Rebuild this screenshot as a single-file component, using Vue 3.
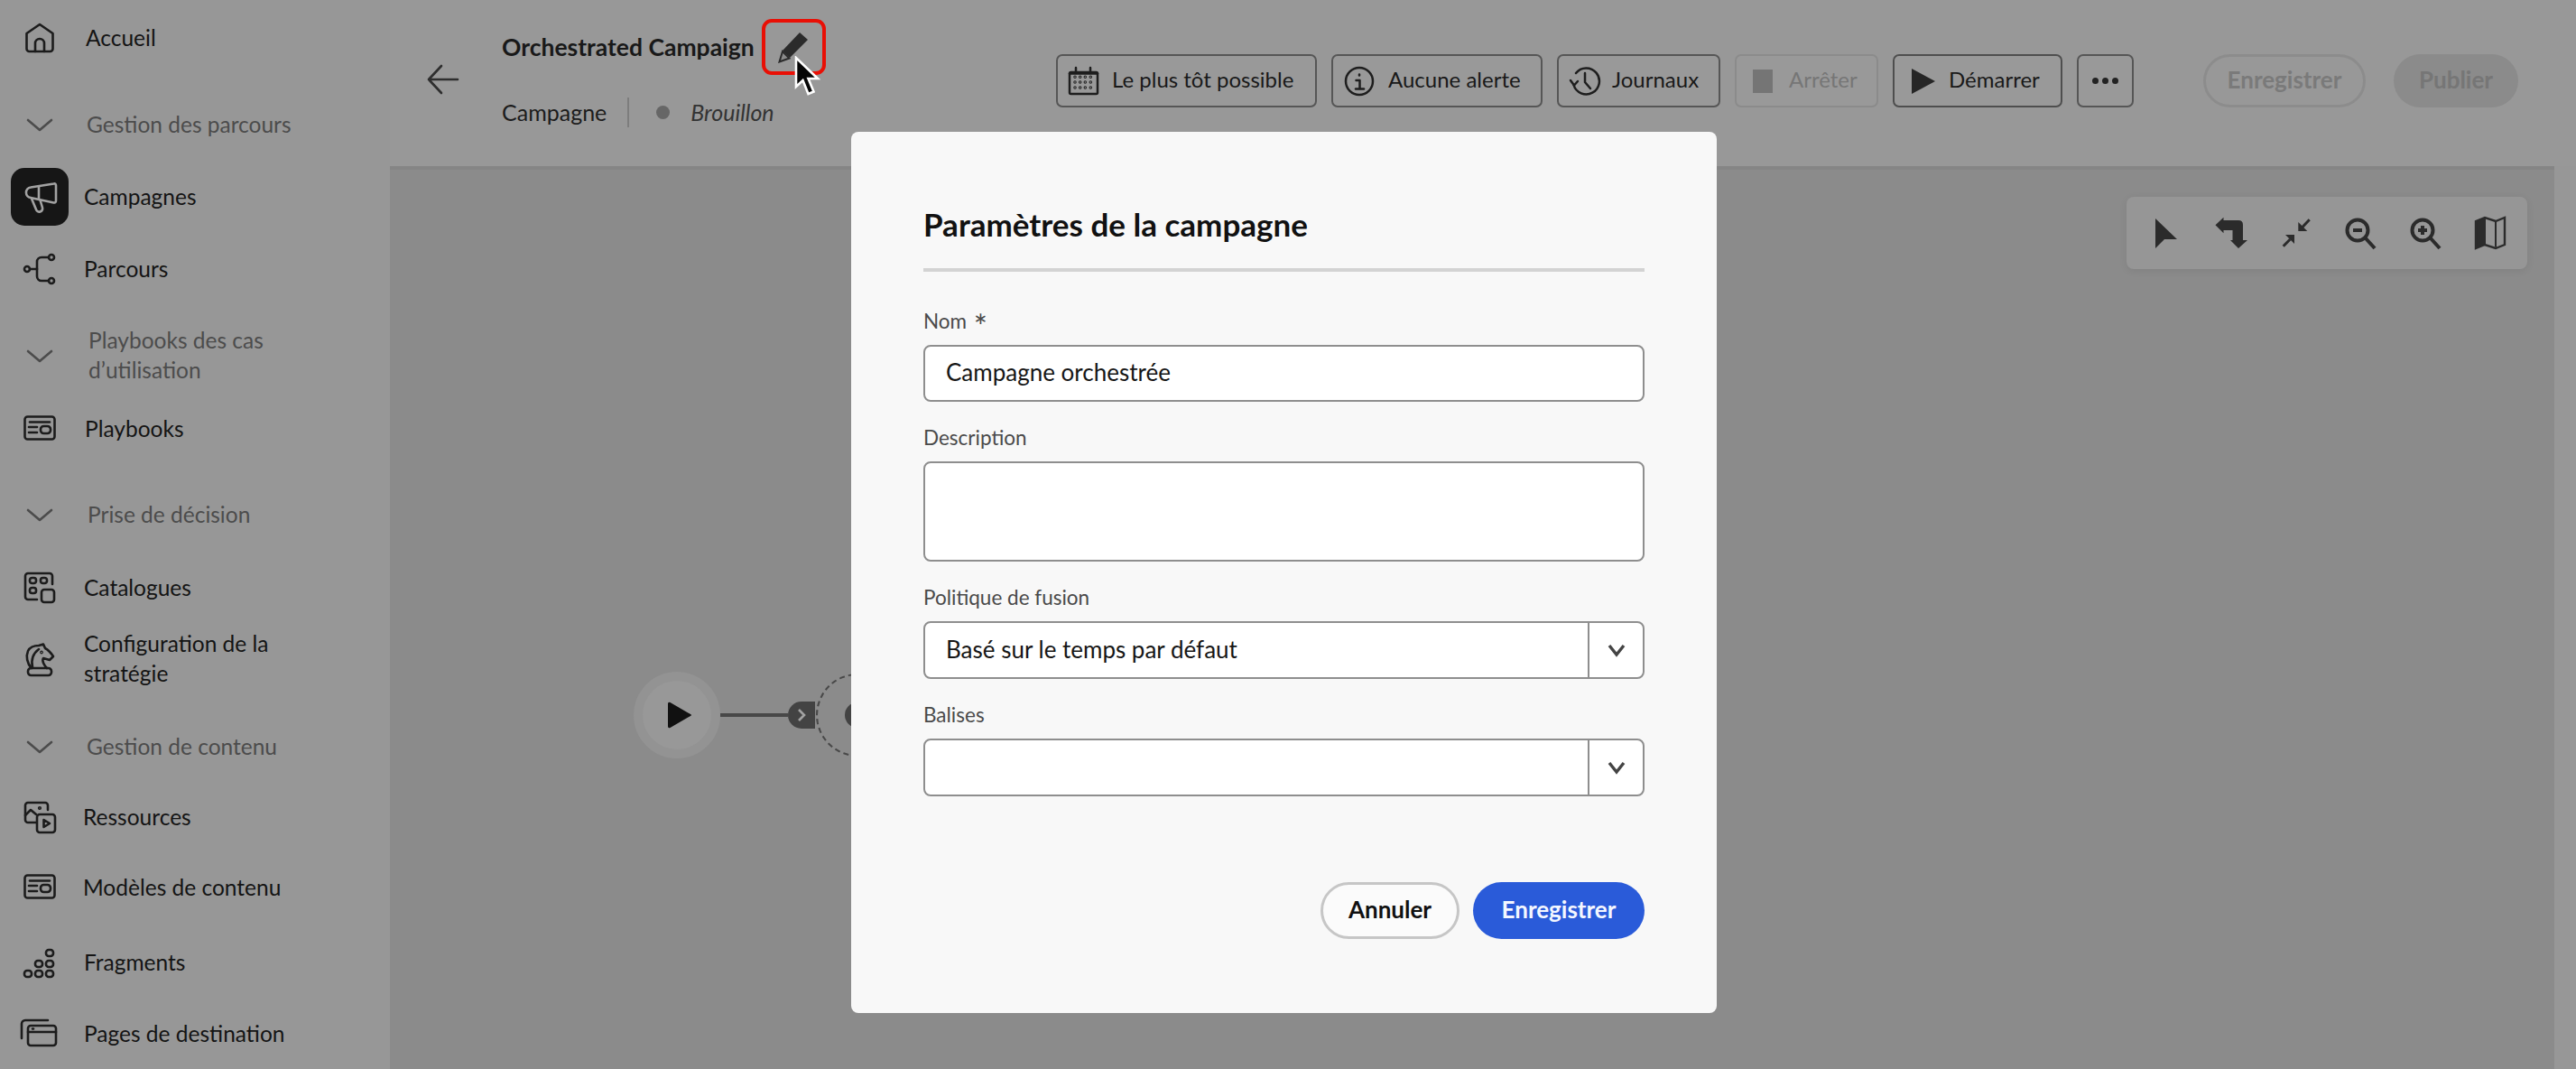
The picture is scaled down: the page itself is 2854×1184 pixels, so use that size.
<script setup>
const c = (x, y, r) => `M${x - r} ${y}a${r} ${r} 0 1 0 ${2 * r} 0a${r} ${r} 0 1 0 ${-2 * r} 0Z`
const rr = (x, y, w, h, r) => `M${x + r} ${y}H${x + w - r}a${r} ${r} 0 0 1 ${r} ${r}V${y + h - r}a${r} ${r} 0 0 1 ${-r} ${r}H${x + r}a${r} ${r} 0 0 1 ${-r} ${-r}V${y + r}a${r} ${r} 0 0 1 ${r} ${-r}Z`

const card = [rr(1.5, 4.5, 33, 25, 3), 'M7 10.5H29', 'M6 16H15', 'M6 22H15', rr(19, 15, 11, 8, 3.5)]
const nav = {
  home: ['M18 3L3.5 13V30a3 3 0 0 0 3 3H29.5a3 3 0 0 0 3-3V13Z', 'M13 33V24a5 5 0 0 1 10 0V33'],
  horn: ['M8 7.5L33.5 3.5Q36 3 36 5.5V22Q36 25 33.5 24.5L8 19A5.8 5.8 0 0 1 8 7.5Z', 'M17 6.5V20.5', 'M9 20L14 32a3.5 3.5 0 0 0 7-2L18.5 21.5'],
  flow: [c(4, 18, 3), c(31, 5, 3), c(31, 31, 3), 'M7 18H15', 'M28 5H20a5 5 0 0 0-5 5V26a5 5 0 0 0 5 5H28'],
  card,
  cat: ['M32 14V5a3 3 0 0 0-3-3H5a3 3 0 0 0-3 3V28a3 3 0 0 0 3 3H15', rr(7, 7, 7, 6, 2.5), rr(19, 7, 7, 6, 2.5), rr(7, 18, 7, 6, 2.5), rr(20, 20, 14, 14, 3)],
  knight: [rr(5, 28, 26, 8, 3.5), 'M9 28C4 23 2.5 15 5 9C7 5 12 3 17 3L22 1.5L24 6C28 8 31 12 33 15L29 19L22 17C20 20 23 25 26 28', 'M10 27C8.5 20 9 13 17 7', c(20, 10.5, .6)],
  res: ['M14 24H5a3 3 0 0 1-3-3V5a3 3 0 0 1 3-3H24a3 3 0 0 1 3 3V10', 'M2 16L8 10L14 15', c(18, 8, .8), rr(15, 15, 20, 20, 3), 'M22.5 21L29 25L22.5 29Z'],
  frag: [rr(1, 27, 8, 7, 3), rr(13, 27, 8, 7, 3), rr(25, 27, 8, 7, 3), rr(13, 16, 8, 7, 3), rr(25, 16, 8, 7, 3), rr(25, 4, 8, 7, 3)],
  pages: ['M27 3H2a4 4 0 0 0-4 4V23', rr(5, 9, 31, 22, 3), 'M5 16H36', 'M10 12.5H11'],
  chev: ['M5 13L18 24L31 13'],
}

const rows = [
  { t: ['Accueil'], i: 'home', mt: 10, x: 95 },
  { t: ['Gestion des parcours'], head: true, mt: 32, x: 96 },
  { t: ['Campagnes'], i: 'horn', active: true, mt: 16, x: 93 },
  { t: ['Parcours'], i: 'flow', mt: 16, x: 93 },
  { t: ['Playbooks des cas', 'd’utilisation'], head: true, mt: 32, x: 98 },
  { t: ['Playbooks'], i: 'card', mt: 17, x: 94 },
  { t: ['Prise de décision'], head: true, mt: 31, x: 97 },
  { t: ['Catalogues'], i: 'cat', mt: 17, x: 93 },
  { t: ['Configuration de la', 'stratégie'], i: 'knight', mt: 15, x: 93 },
  { t: ['Gestion de contenu'], head: true, mt: 33, x: 96 },
  { t: ['Ressources'], i: 'res', mt: 14, x: 92 },
  { t: ['Modèles de contenu'], i: 'card', mt: 14, x: 92 },
  { t: ['Fragments'], i: 'frag', mt: 19, x: 93 },
  { t: ['Pages de destination'], i: 'pages', mt: 15, x: 93 },
]

const calDots = []
for (const y of [13.3, 19, 25]) for (const x of [8, 13.7, 19.3, 25.3]) calDots.push(c(x, y, 0.5))
const actionIcons = {
  cal: [rr(2, 8, 31, 24, 1.5), 'M2 9.5H33', 'M9 3V8', 'M25 3V8', ...calDots],
  info: [c(18, 18, 15), 'M14.5 17H18.5V26', 'M14 26.5H23', 'M18 10.5V11.5'],
  hist: ['M5.5 22A14.5 14.5 0 1 0 8 9', 'M18 9V19L24 26', 'M2 17L6 22.5L10 18'],
}
const actions = [
  { t: 'Le plus tôt possible', i: 'cal', w: 289, tx: 60 },
  { t: 'Aucune alerte', i: 'info', w: 234, tx: 61 },
  { t: 'Journaux', i: 'hist', w: 181, tx: 59 },
  { t: 'Arrêter', stop: true, w: 159, tx: 58, off: true },
  { t: 'Démarrer', play: true, w: 188, tx: 60 },
]
const tools = [
  { k: 'sel', fill: ['M6 2L30 25H16L6 35Z'], line: [] },
  { k: 'route', fill: ['M.5 9.3L9.5 .7V4H26Q31 4 31 9V26H36L26 35L17 26H19.5V15H9.5V18.3Z'], line: [] },
  { k: 'fit', fill: ['M20.3 16V6L30.3 16Z', 'M16 20H6L16 30Z'], line: ['M24.7 11.7L32.7 3.3', 'M11.3 25L3.7 32.7'], w: 3 },
  { k: 'out', fill: [], line: [c(15, 15, 11.5), 'M24 24L34 35', 'M10 15H20'], w: 4 },
  { k: 'in', fill: [], line: [c(15, 15, 11.5), 'M24 24L34 35', 'M10 15H20', 'M15 10V20'], w: 4 },
  { k: 'map', fill: ['M3 4L13 1V31L3 35Z', 'M23 4L25 5V35L23 33Z'], line: ['M2 5L12 1L24 5L34 1V31L24 35L12 31L2 35Z'], w: 2.4 },
]
</script>

<template>
  <div class="page">
    <aside class="side">
      <div
        v-for="r in rows"
        :key="r.t[0]"
        class="row"
        :class="{ head: r.head }"
        :style="{ marginTop: r.mt + 'px', paddingLeft: r.x + 'px' }"
      >
        <span class="ico" :class="{ on: r.active }">
          <svg width="36" height="36" viewBox="0 0 36 36" class="svg">
            <path v-for="d in nav[r.head ? 'chev' : r.i]" :key="d" :d="d" />
          </svg>
        </span>
        <span class="lbl"><span v-for="l in r.t" :key="l" class="ln">{{ l }}</span></span>
      </div>
    </aside>

    <main class="main">
      <header class="top">
        <svg class="back" width="36" height="36" viewBox="0 0 36 36">
          <path d="M34 18H2M16 3L2 18L16 33" />
        </svg>
        <div class="meta">
          <div class="name">Orchestrated Campaign</div>
          <div class="sub">
            <span>Campagne</span>
            <i class="sep"></i>
            <i class="dot"></i>
            <em>Brouillon</em>
          </div>
        </div>
        <div class="acts">
          <button
            v-for="a in actions"
            :key="a.t"
            class="act"
            :class="{ off: a.off, strong: a.play }"
            :style="{ width: a.w + 'px' }"
          >
            <svg v-if="a.i" class="aico" width="36" height="36" viewBox="0 0 36 36">
              <path v-for="d in actionIcons[a.i]" :key="d" :d="d" />
            </svg>
            <span v-if="a.stop" class="stop"></span>
            <svg v-if="a.play" class="pl" width="30" height="30" viewBox="0 0 30 30"><path d="M2 1L28 15L2 29Z" /></svg>
            <span class="atxt" :style="{ left: a.tx + 'px' }">{{ a.t }}</span>
          </button>
          <button class="act more" aria-label="Plus"><i></i><i></i><i></i></button>
          <button class="pill ghost">Enregistrer</button>
          <button class="pill solid">Publier</button>
        </div>
      </header>
      <div class="rule"></div>
      <section class="canvas">
        <div class="tools">
          <svg v-for="t in tools" :key="t.k" width="36" height="36" viewBox="0 0 36 36" class="tool">
            <path v-for="d in t.fill" :key="d" :d="d" class="tf" />
            <path v-for="d in t.line" :key="d" :d="d" class="tl" :stroke-width="t.w" />
          </svg>
        </div>
        <div class="node">
          <div class="start">
            <svg width="30" height="30" viewBox="0 0 30 30"><path d="M3 2.5Q3 0 5.5 1L28 14Q30 15 28 16L5.5 29Q3 30 3 27.5Z" /></svg>
          </div>
          <div class="wire"></div>
          <div class="tag">
            <svg width="12" height="16" viewBox="0 0 12 16"><path d="M3 2L9 8L3 14" /></svg>
          </div>
          <div class="slot"><div class="plus"></div></div>
        </div>
      </section>
    </main>

    <section class="modal">
      <h2 class="mtitle">Paramètres de la campagne</h2>
      <div class="mrule"></div>
      <div class="field">
        <label class="flabel">Nom <span class="req">*</span></label>
        <input class="inp" value="Campagne orchestrée" readonly />
      </div>
      <div class="field">
        <label class="flabel">Description</label>
        <textarea class="inp area" readonly></textarea>
      </div>
      <div class="field">
        <label class="flabel">Politique de fusion</label>
        <div class="combo">
          <input class="cinp" value="Basé sur le temps par défaut" readonly />
          <span class="cbtn"><svg width="22" height="16" viewBox="0 0 22 16"><path d="M3 3L11 13L19 3" /></svg></span>
        </div>
      </div>
      <div class="field">
        <label class="flabel">Balises</label>
        <div class="combo">
          <input class="cinp" value="" readonly />
          <span class="cbtn"><svg width="22" height="16" viewBox="0 0 22 16"><path d="M3 3L11 13L19 3" /></svg></span>
        </div>
      </div>
      <footer class="mfoot">
        <button class="mb cancel">Annuler</button>
        <button class="mb save">Enregistrer</button>
      </footer>
    </section>

    <div class="mark">
      <svg width="36" height="36" viewBox="0 0 36 36">
        <path d="M5 22L24 2L33 10L13 30Z" fill="#2b2b2b" />
        <path d="M1.5 34.5L5 23L12.5 30.5Z" fill="#8a8a8a" stroke="#2b2b2b" stroke-width="2" />
      </svg>
    </div>
    <svg class="cursor" width="30" height="46" viewBox="0 0 30 46">
      <path d="M2 2V34L9.5 27L15.5 42L21.5 39.5L15.5 25H26Z" fill="#050505" stroke="#fff" stroke-width="2.6" stroke-linejoin="miter" />
    </svg>
  </div>
</template>

<style>
html, body { margin: 0; background: #979797; }
</style>

<style scoped>
.page {
  position: relative;
  display: flex;
  width: 2854px;
  height: 1184px;
  overflow: hidden;
  background: #979797;
  font-family: Lato, "Liberation Sans", sans-serif;
  color: #161616;
}
button { font-family: inherit; padding: 0; cursor: default; }
em, i { font-style: normal; }

.side { width: 432px; flex: none; display: flex; flex-direction: column; }
.row { position: relative; display: flex; align-items: center; height: 64px; box-sizing: border-box; font-size: 24.5px; line-height: 33px; color: #141414; }
.row.head { color: #4c4c4c; }
.ico {
  position: absolute;
  left: 12px;
  top: 0;
  width: 64px;
  height: 64px;
  border-radius: 15px;
  display: flex;
  align-items: center;
  justify-content: center;
  color: #1c1c1c;
}
.ico.on { background: #161616; color: #a2a2a2; }
.head .ico { color: #4c4c4c; }
.svg { overflow: visible; fill: none; stroke: currentColor; stroke-width: 2.6; stroke-linejoin: round; stroke-linecap: round; }
.lbl { display: flex; flex-direction: column; padding-bottom: 2px; }
.ln { white-space: nowrap; }

.main { flex: 1; display: flex; flex-direction: column; min-width: 0; }
.top { height: 184px; flex: none; display: flex; align-items: flex-start; padding-left: 41px; background: #989898; }
.back { margin-top: 70px; flex: none; fill: none; stroke: #2e2e2e; stroke-width: 2.6; stroke-linecap: round; stroke-linejoin: round; }
.meta { margin-left: 47px; padding-top: 32px; }
.name { font-size: 26.5px; line-height: 40px; font-weight: 700; color: #191919; white-space: nowrap; }
.sub { display: flex; align-items: center; height: 40px; margin-top: 32px; font-size: 25px; color: #1c1c1c; }
.sep { width: 2px; height: 33px; margin-left: 23px; background: #7d7d7d; }
.dot { width: 15px; height: 15px; margin-left: 30px; border-radius: 50%; background: #666; }
.sub em { margin-left: 23px; font-style: italic; color: #333; }

.acts { margin-left: auto; margin-top: 60px; padding-right: 64px; display: flex; align-items: center; gap: 16px; }
.act {
  position: relative;
  display: block;
  height: 59px;
  border: 2px solid #565656;
  border-radius: 7px;
  background: #999;
  box-sizing: border-box;
  color: #191919;
  font-size: 24px;
}
.act.off { border-color: #8b8b8b; color: #767676; }
.act.strong { border-color: #4e4e4e; }
.atxt { position: absolute; top: 11px; line-height: 30px; white-space: nowrap; }
.aico { position: absolute; left: 11px; top: 10px; fill: none; stroke: #1e1e1e; stroke-width: 2.5; stroke-linecap: round; stroke-linejoin: round; }
.stop { position: absolute; left: 18px; top: 15px; width: 22px; height: 26px; background: #757575; }
.pl { position: absolute; left: 17px; top: 13px; fill: #262626; }
.more { width: 63px; display: flex; align-items: center; justify-content: center; gap: 4px; }
.more i { width: 7px; height: 7px; border-radius: 50%; background: #222; }
.pill { height: 59px; padding-bottom: 4px; border-radius: 30px; box-sizing: border-box; font-size: 26px; font-weight: 700; color: #7a7a7a; }
.ghost { width: 180px; margin-left: 61px; border: 3px solid #8c8c8c; background: transparent; }
.solid { width: 138px; margin-left: 15px; border: 0; background: #8b8b8b; color: #767676; }

.rule { height: 4px; flex: none; background: #858585; margin-right: 24px; }
.canvas { position: relative; flex: 1; margin-right: 24px; background: #8b8b8b; }
.tools {
  position: absolute;
  top: 30px;
  right: 30px;
  width: 444px;
  height: 80px;
  box-sizing: border-box;
  padding: 0 23px 0 26px;
  border-radius: 8px;
  background: #969696;
  box-shadow: 0 2px 8px rgba(0, 0, 0, .08);
  display: flex;
  align-items: center;
  justify-content: space-between;
}
.tool { overflow: visible; flex: none; }
.tf { fill: #2b2b2b; }
.tl { fill: none; stroke: #2b2b2b; }

.node { position: absolute; left: 270px; top: 556px; display: flex; align-items: center; }
.start { width: 76px; height: 76px; border: 10px solid #939393; border-radius: 50%; background: #989898; display: flex; align-items: center; justify-content: center; }
.start svg { fill: #111; margin-left: 4px; }
.wire { width: 75px; height: 4px; background: #484848; }
.tag { width: 30px; height: 30px; border-radius: 15px 0 0 15px; background: #434343; display: flex; align-items: center; justify-content: center; }
.tag svg { fill: none; stroke: #a2a2a2; stroke-width: 2.6; }
.slot { width: 92px; height: 92px; margin-left: 1px; box-sizing: border-box; border: 2px dashed #484848; border-radius: 50%; display: flex; align-items: center; justify-content: center; }
.plus { width: 28px; height: 28px; border-radius: 50%; background: #434343; }

.modal {
  position: absolute;
  left: 943px;
  top: 146px;
  width: 959px;
  height: 976px;
  box-sizing: border-box;
  padding: 80px 80px 0;
  border-radius: 8px;
  background: #f8f8f8;
  display: flex;
  flex-direction: column;
}
.mtitle { margin: 0; height: 48px; font-size: 35px; line-height: 44px; font-weight: 700; color: #111; }
.mrule { height: 4px; margin-top: 23px; margin-bottom: 15px; background: #d3d3d3; }
.field { display: flex; flex-direction: column; margin-top: 26px; }
.flabel { height: 30px; line-height: 27px; margin-bottom: 10px; font-size: 22.5px; color: #4a4a4a; }
.req { display: inline-block; margin-left: 2px; font-size: 36px; line-height: 20px; vertical-align: -11px; }
.inp {
  height: 63px;
  box-sizing: border-box;
  padding: 0 23px 3px;
  border: 2px solid #8e8e8e;
  border-radius: 8px;
  background: #fff;
  font: 26px Lato, "Liberation Sans", sans-serif;
  color: #161616;
  outline: 0;
  resize: none;
}
.area { height: 111px; display: block; }
.combo { display: flex; height: 64px; box-sizing: border-box; border: 2px solid #8e8e8e; border-radius: 8px; background: #fff; overflow: hidden; }
.cinp { flex: 1; min-width: 0; padding: 0 23px 3px; border: 0; outline: 0; background: transparent; font: 26px Lato, "Liberation Sans", sans-serif; color: #161616; }
.cbtn { width: 59px; flex: none; border-left: 2px solid #8e8e8e; display: flex; align-items: center; justify-content: center; }
.cbtn svg { fill: none; stroke: #444; stroke-width: 3.4; }
.mfoot { display: flex; justify-content: flex-end; gap: 15px; margin-top: 95px; }
.mb { height: 63px; padding-bottom: 4px; border-radius: 32px; box-sizing: border-box; font-size: 26px; font-weight: 700; }
.cancel { width: 154px; border: 3px solid #c6c6c6; background: #fbfbfb; color: #111; }
.save { width: 190px; border: 0; background: #2a5bd9; color: #f4f7ff; }

.mark {
  position: absolute;
  left: 844px;
  top: 21px;
  width: 71px;
  height: 62px;
  box-sizing: border-box;
  border: 4px solid #e90f05;
  border-radius: 11px;
  display: flex;
  align-items: center;
  justify-content: center;
}
.cursor { position: absolute; left: 880px; top: 62px; }
</style>
